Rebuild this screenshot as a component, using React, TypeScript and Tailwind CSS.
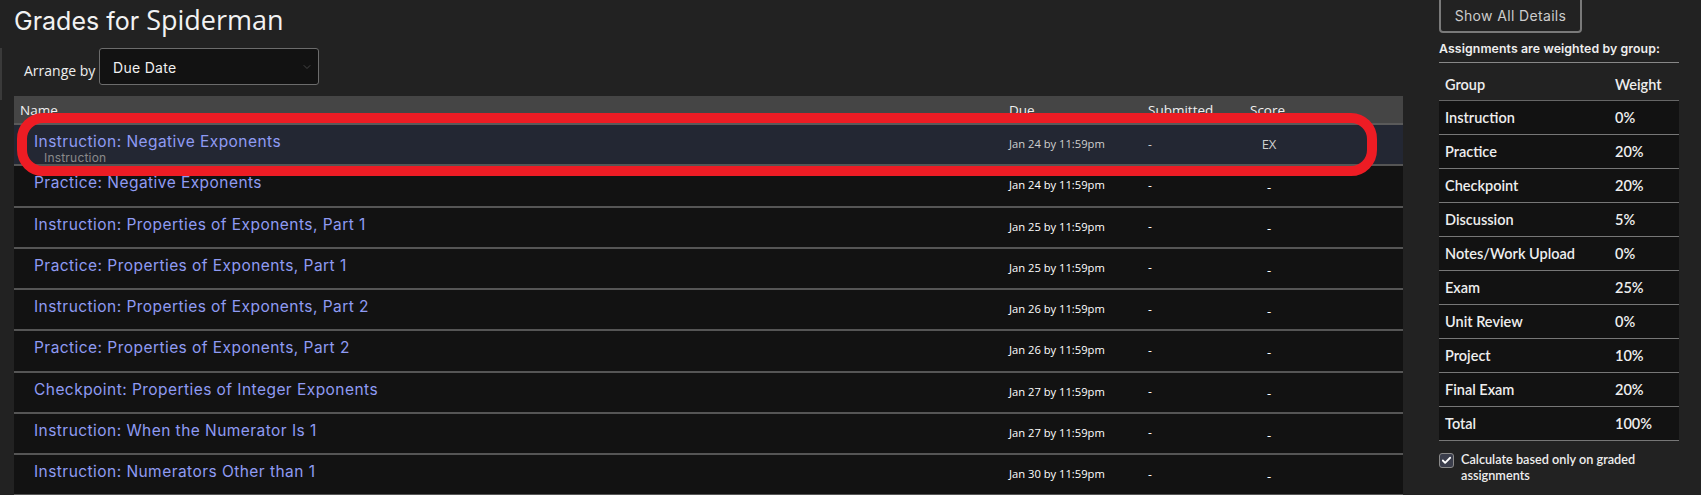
import { Check, ChevronDown } from 'lucide-react';

const rows = [
  { name: 'Instruction: Negative Exponents', due: 'Jan 24 by 11:59pm', score: 'EX', sub: 'Instruction' },
  { name: 'Practice: Negative Exponents', due: 'Jan 24 by 11:59pm' },
  { name: 'Instruction: Properties of Exponents, Part 1', due: 'Jan 25 by 11:59pm' },
  { name: 'Practice: Properties of Exponents, Part 1', due: 'Jan 25 by 11:59pm' },
  { name: 'Instruction: Properties of Exponents, Part 2', due: 'Jan 26 by 11:59pm' },
  { name: 'Practice: Properties of Exponents, Part 2', due: 'Jan 26 by 11:59pm' },
  { name: 'Checkpoint: Properties of Integer Exponents', due: 'Jan 27 by 11:59pm' },
  { name: 'Instruction: When the Numerator Is 1', due: 'Jan 27 by 11:59pm' },
  { name: 'Instruction: Numerators Other than 1', due: 'Jan 30 by 11:59pm' },
];

const weights = [
  ['Instruction', '0%'],
  ['Practice', '20%'],
  ['Checkpoint', '20%'],
  ['Discussion', '5%'],
  ['Notes/Work Upload', '0%'],
  ['Exam', '25%'],
  ['Unit Review', '0%'],
  ['Project', '10%'],
  ['Final Exam', '20%'],
  ['Total', '100%'],
];

export default function App() {
  return (
    <div className="relative h-[495px] w-[1701px] overflow-hidden bg-[#222222] flex text-white font-['Open_Sans',sans-serif]">
      {/* left edge strip */}
      <div className="absolute left-0 top-[48px] h-[52px] w-[2px] bg-[#3a3a3a]" />

      <main className="w-[1403px] pl-[14px] shrink-0">
        <h1 className="h-[44px] pt-[3px] leading-[34px] text-[#f2f2f2]">
          <span className="font-['Inter',sans-serif] text-[25px]">Grades for </span>
          <span className="font-['Open_Sans',sans-serif] text-[27px]">Spiderman</span>
        </h1>

        <div className="flex items-center h-[37px] mt-[4px]">
          <span className="pl-[10px] w-[85px] text-[14px] pt-[8px] text-[#eeeeee]">Arrange by</span>
          <div className="relative w-[220px] h-[37px] bg-[#121212] border border-[#6c6c6c] rounded-[3px] flex items-center pl-[13px] pt-[1px]">
            <span className="font-['Inter',sans-serif] text-[14px] tracking-[0.3px] text-[#f0f0f0]">Due Date</span>
            <ChevronDown className="absolute right-[5px] top-[12px] text-[#444]" size={12} strokeWidth={2} />
          </div>
        </div>

        <div className="mt-[11px]">
          <div className="flex h-[29px] bg-[#454545] border-b-2 border-[#5a5a5a] text-[13.5px] text-[#f0f0f0] pt-[6px] leading-[16px]">
            <div className="w-[995px] pl-[6px]">Name</div>
            <div className="w-[139px]">Due</div>
            <div className="w-[102px]">Submitted</div>
            <div className="w-[40px]">Score</div>
          </div>

          {rows.map((r, i) => (
            <div
              key={i}
              className={`flex h-[41.25px] border-b-2 border-[#555555] ${i === 0 ? 'bg-[#232733]' : 'bg-[#121212]'}`}
            >
              <div className="w-[995px] pl-[20px] pt-[7px]">
                <div className="font-['Inter',sans-serif] text-[15.5px] tracking-[0.45px] leading-[20px] text-[#8f9bf3]">{r.name}</div>
                {r.sub && (
                  <div className="pl-[10px] text-[12px] tracking-[0.2px] leading-[12px] text-[#8a8a8a] font-['Inter',sans-serif]">{r.sub}</div>
                )}
              </div>
              <div className={`w-[139px] flex items-center text-[11.2px] ${i === 0 ? 'text-[#cfcfcf]' : 'text-white'}`}>{r.due}</div>
              <div className={`w-[102px] flex items-center text-[12px] ${i === 0 ? 'text-[#cfcfcf]' : 'text-white'}`}>-</div>
              <div className={`w-[38px] flex items-center justify-center text-[13px] ${i === 0 ? 'text-[#cfcfcf]' : 'text-white pt-[4px]'}`}>
                {r.score ?? '-'}
              </div>
            </div>
          ))}
        </div>
      </main>

      <aside className="ml-[36px] w-[240px] shrink-0">
        <button className="-mt-[8px] h-[41px] w-[143px] border-2 border-[#7a7a7a] rounded-[4px] text-[14px] tracking-[0.35px] text-[#cccccc] font-['Inter',sans-serif] pt-[6px]">
          Show All Details
        </button>
        <div className="mt-[8px] pb-[6px] border-b border-[#888888] font-['Inter',sans-serif] font-semibold text-[12.3px] leading-[15px] text-[#eeeeee] tracking-[0.1px]">
          Assignments are weighted by group:
        </div>
        <div className="flex h-[38px] items-center border-b border-[#666666] pl-[6px] pt-[6px] font-['Lato',sans-serif] text-[14.5px] font-semibold text-[#eeeeee]">
          <div className="w-[170px]">Group</div>
          <div>Weight</div>
        </div>
        {weights.map(([g, w]) => (
          <div key={g} className="flex h-[34px] items-center border-b border-[#777777] bg-[#121212] pl-[6px] font-['Lato',sans-serif] text-[14.5px] font-semibold text-[#eeeeee]">
            <div className="w-[170px]">{g}</div>
            <div>{w}</div>
          </div>
        ))}
        <div className="flex mt-[11px] gap-[7px]">
          <div className="w-[15px] h-[15px] mt-[1px] shrink-0 rounded-[3px] border border-[#8a8a8a] bg-[#3b3e4c] flex items-center justify-center">
            <Check size={11} strokeWidth={4} className="text-white" />
          </div>
          <div className="font-['Lato',sans-serif] text-[12.7px] leading-[15.5px] font-semibold text-[#eeeeee]">
            Calculate based only on graded
            <br />
            assignments
          </div>
        </div>
      </aside>

      {/* annotation outline */}
      <div className="absolute left-[17px] top-[113px] w-[1360px] h-[63px] border-[10px] border-[#ed1c24] rounded-[26px]" />
    </div>
  );
}
